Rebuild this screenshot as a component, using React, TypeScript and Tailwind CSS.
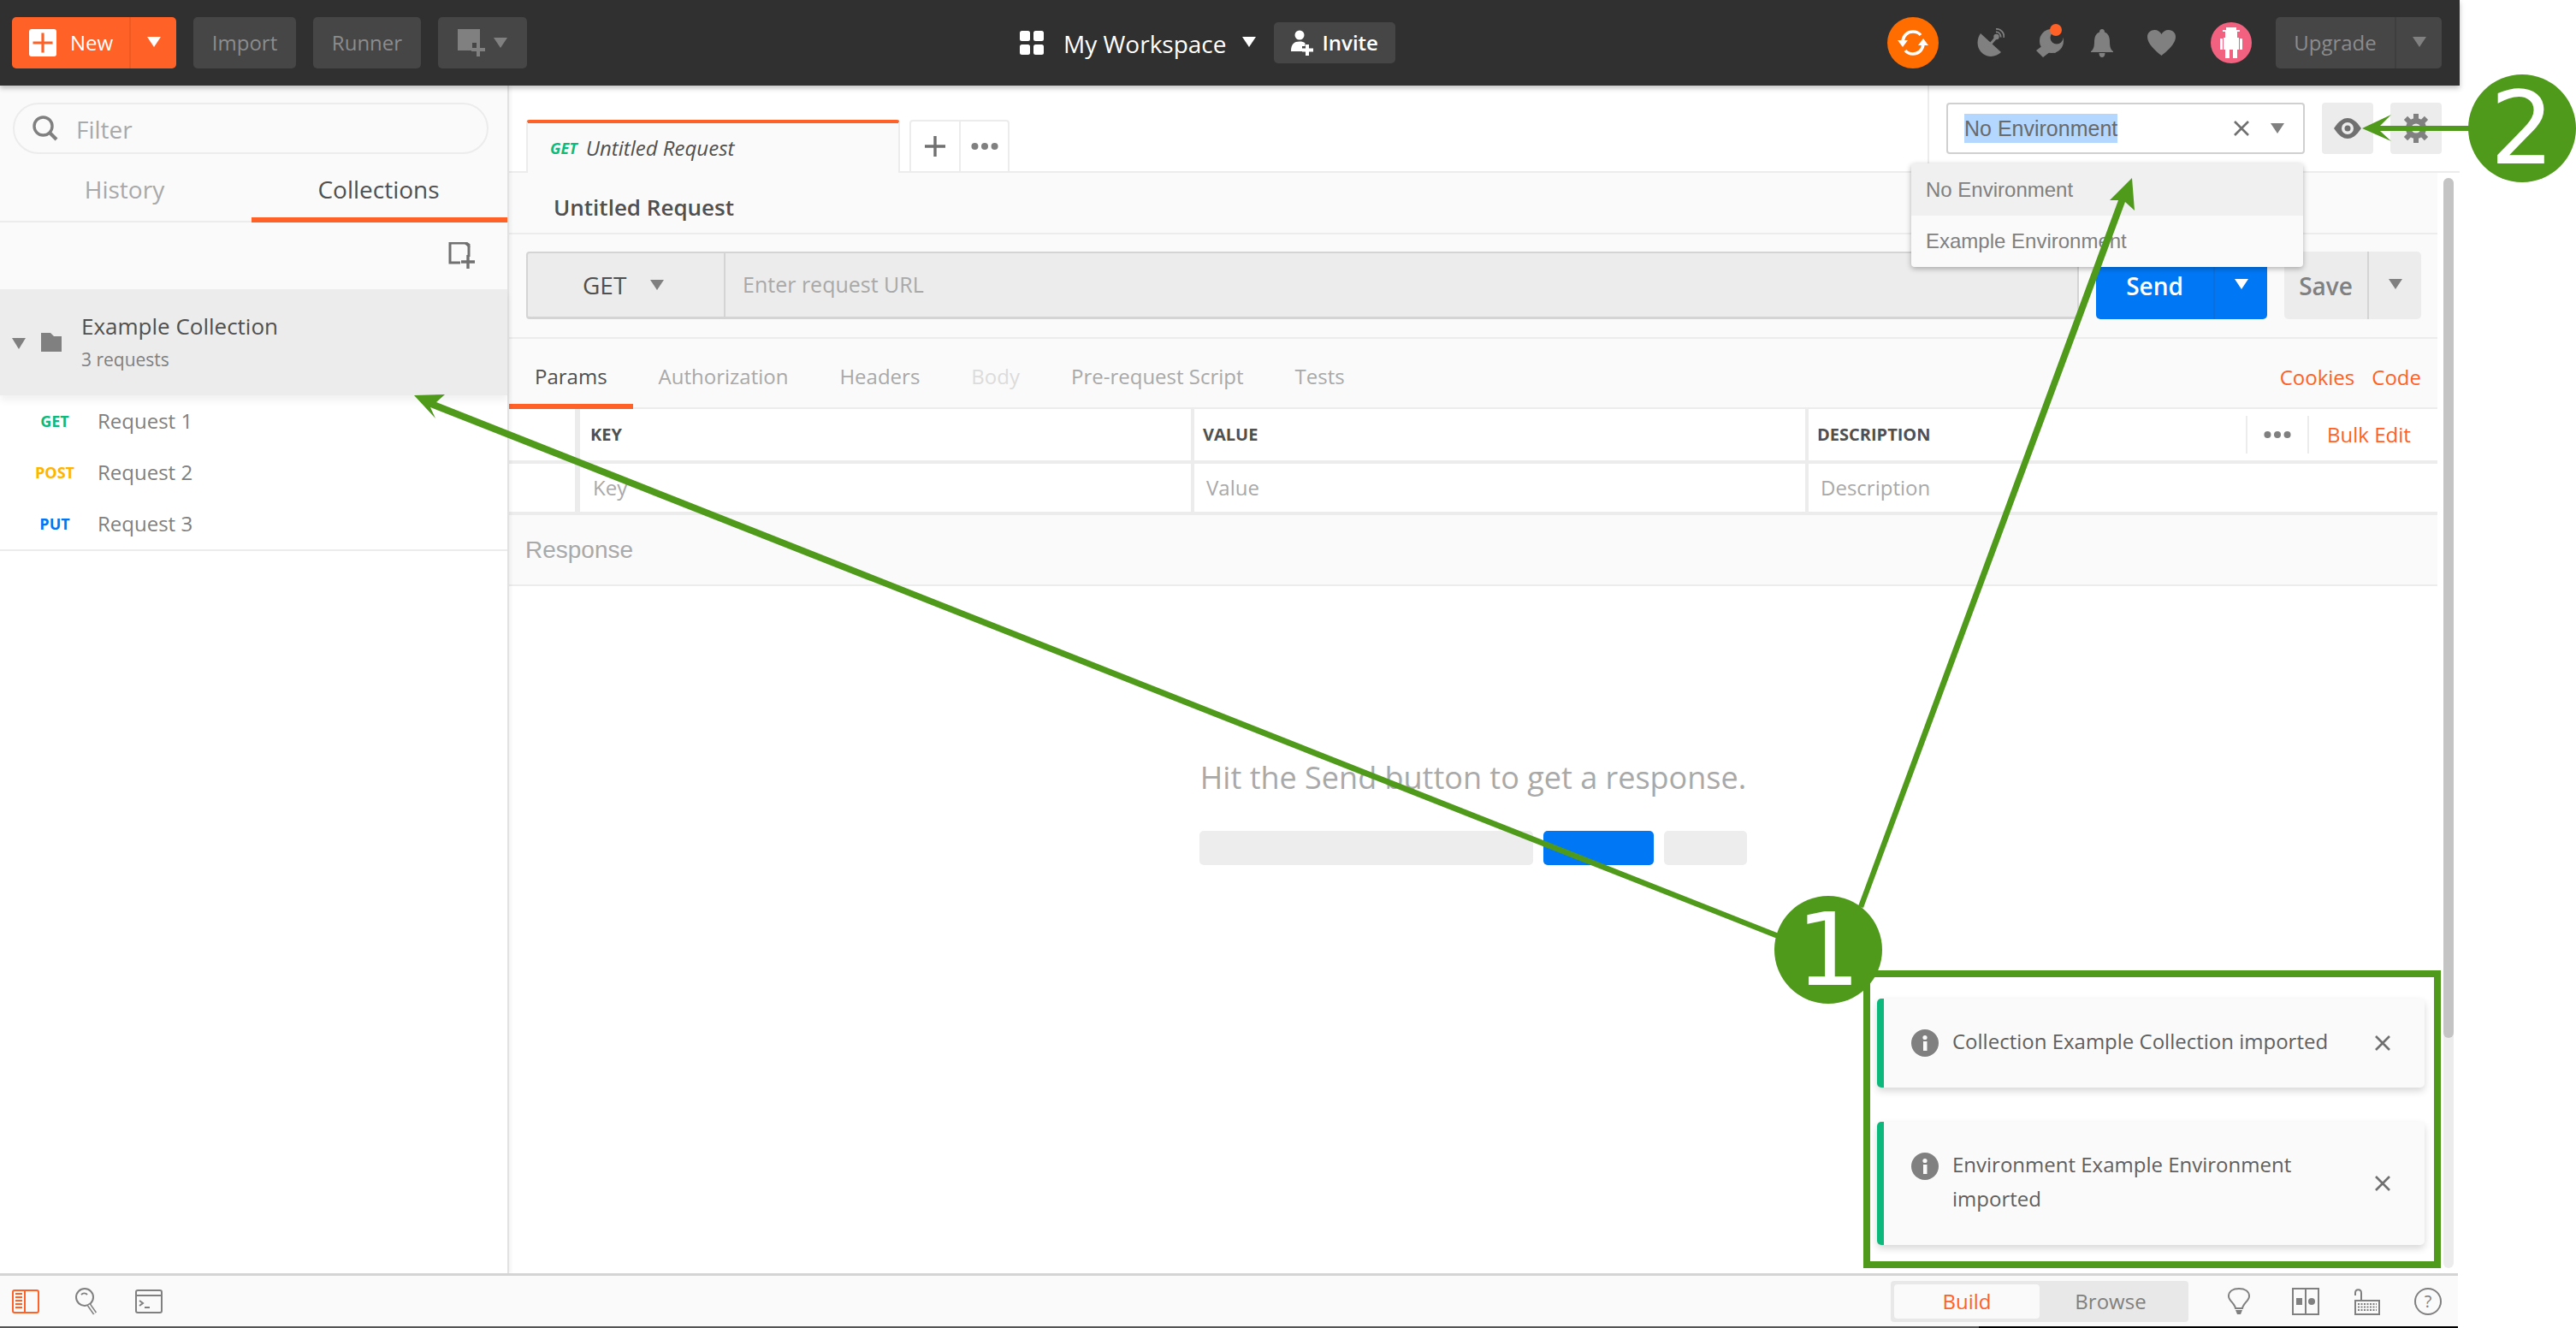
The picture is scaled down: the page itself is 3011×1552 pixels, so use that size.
import type { ReactNode } from "react"

const ORANGE = "#ff6126"

function Tri({ color = "#808080", w = 16, h = 12 }: { color?: string; w?: number; h?: number }) {
    return (
        <svg width={w} height={h} viewBox="0 0 16 12" preserveAspectRatio="none" className="shrink-0">
            <polygon points="0,0 16,0 8,12" fill={color} />
        </svg>
    )
}

function Close({ color = "#707070" }: { color?: string }) {
    return (
        <svg width="20" height="20" viewBox="0 0 20 20" className="shrink-0">
            <path d="M2 2 L18 18 M18 2 L2 18" stroke={color} strokeWidth="2.6" />
        </svg>
    )
}

function Dots({ size = 36 }: { size?: number }) {
    return (
        <svg width={size} height="10" viewBox="0 0 36 10">
            <circle cx="5" cy="5" r="4.5" fill="#808080" />
            <circle cx="18" cy="5" r="4.5" fill="#808080" />
            <circle cx="31" cy="5" r="4.5" fill="#808080" />
        </svg>
    )
}

function DarkButton({ children, className }: { children: ReactNode; className: string }) {
    return (
        <div className={`flex h-[60px] items-center justify-center rounded-[5px] bg-[#464646] text-[24px] text-[#8c8c8c] ${className}`}>
            {children}
        </div>
    )
}

function Header() {
    return (
        <header className="relative z-20 flex h-[100px] shrink-0 items-center bg-[#303030] pl-[14px] pr-[21px] shadow-[0_3px_6px_rgba(0,0,0,0.25)]">
            <div className="flex h-[60px] w-[192px] items-center rounded-[5px] bg-[#ff6126] text-white">
                <div className="flex h-full w-[139px] items-center border-r-2 border-[#ee5a22] pl-[20px]">
                    <svg width="32" height="32" viewBox="0 0 32 32">
                        <rect width="32" height="32" rx="3" fill="#fff" />
                        <path d="M16 4.5 V27.5 M4.5 16 H27.5" stroke="#ff6126" strokeWidth="3.2" />
                    </svg>
                    <span className="ml-[16px] text-[24px]">New</span>
                </div>
                <div className="flex flex-1 items-center justify-center pb-[2px]">
                    <Tri color="#fff" />
                </div>
            </div>
            <DarkButton className="ml-[20px] w-[120px]">Import</DarkButton>
            <DarkButton className="ml-[20px] w-[126px]">Runner</DarkButton>
            <DarkButton className="ml-[20px] w-[104px] gap-[8px]">
                <svg width="34" height="34" viewBox="0 0 34 34">
                    <path d="M0 1 H26 V17 H17 V26 H0 Z" fill="#808080" />
                    <path d="M24 17 V33 M16 25 H32" stroke="#808080" strokeWidth="4" />
                </svg>
                <Tri />
            </DarkButton>

            <div className="ml-[576px] flex items-center">
                <svg width="28" height="28" viewBox="0 0 28 28" fill="#fff">
                    <rect width="12" height="12" rx="2.5" />
                    <rect x="16" width="12" height="12" rx="2.5" />
                    <rect y="16" width="12" height="12" rx="2.5" />
                    <rect x="16" y="16" width="12" height="12" rx="2.5" />
                </svg>
                <span className="ml-[23px] pt-[2px] text-[28px] text-white">My Workspace</span>
                <div className="ml-[18px] mb-[2px]">
                    <Tri color="#fff" />
                </div>
                <div className="ml-[21px] flex h-[48px] w-[142px] items-center rounded-[5px] bg-[#464646] pl-[20px] text-[24px] font-semibold text-white">
                    <svg width="26" height="30" viewBox="0 0 26 30" fill="#fff">
                        <circle cx="10" cy="6" r="5.5" />
                        <path d="M0 25 C0 16 4 13.5 10 13.5 C13 13.5 15 14 16.5 15.5 V19 H13 V25 Z" />
                        <path d="M19 17 V30 M13 23.5 H26" stroke="#fff" strokeWidth="4" />
                    </svg>
                    <span className="ml-[11px]">Invite</span>
                </div>
            </div>

            <div className="ml-auto flex items-center">
                <div className="flex h-[60px] w-[60px] items-center justify-center rounded-full bg-[#ff6c00]">
                    <svg width="36" height="36" viewBox="0 0 36 36" fill="none">
                        <path d="M6 16 C7 9 12 5 18 5 C22 5 25 6.5 27 9" stroke="#fff" strokeWidth="3.6" />
                        <path d="M30 20 C29 27 24 31 18 31 C14 31 11 29.5 9 27" stroke="#fff" strokeWidth="3.6" />
                        <polygon points="0,15 12,15 6,23" fill="#fff" />
                        <polygon points="24,21 36,21 30,13" fill="#fff" />
                    </svg>
                </div>
                {/* satellite dish */}
                <svg className="ml-[44px]" width="33" height="34" viewBox="0 0 33 34" fill="none">
                    <path d="M5 6 L29 28 C24 33 15 35 8 30 C0 24 0 13 5 6 Z" fill="#808080" />
                    <path d="M17 18 L23 11" stroke="#808080" strokeWidth="3" />
                    <circle cx="23.5" cy="10" r="3.2" fill="#808080" />
                    <path d="M23 4.5 C26 4 29 7 28.5 10.5 M23 0.8 C28.5 0.5 33 5 32.3 11" stroke="#808080" strokeWidth="1.8" />
                </svg>
                {/* wrench with notification dot */}
                <svg className="ml-[37px] overflow-visible" width="32" height="34" viewBox="0 0 32 34">
                    <circle cx="18" cy="15" r="14" fill="#808080" />
                    <path d="M8 20 L0 26 L8 34 L17 27 L22 29 L30 22 L32 13 L18 12 Z" fill="#808080" />
                    <circle cx="24" cy="11" r="7.5" fill="#303030" />
                    <rect x="21" y="0" width="12" height="11" fill="#303030" />
                    <circle cx="23" cy="2" r="7" fill="#ff6126" />
                </svg>
                <svg className="ml-[32px]" width="26" height="33" viewBox="0 0 26 33" fill="#808080">
                    <path d="M13 0 C15 0 16 1.5 16 3.5 C20 5 22 9 22 15 C22 20 23 24 26 26 V27 H0 V26 C3 24 4 20 4 15 C4 9 6 5 10 3.5 C10 1.5 11 0 13 0 Z" />
                    <path d="M9.5 28 H16.5 C16.5 31 15 33 13 33 C11 33 9.5 31 9.5 28 Z" />
                </svg>
                <svg className="ml-[40px]" width="33" height="30" viewBox="0 0 33 30" fill="#808080">
                    <path d="M16.5 30 C9 24 0 16 0 8 C0 3 4 0 8.5 0 C12 0 15 2 16.5 5 C18 2 21 0 24.5 0 C29 0 33 3 33 8 C33 16 24 24 16.5 30 Z" />
                </svg>
                <div className="ml-[41px] flex h-[48px] w-[48px] items-center justify-center rounded-full bg-[#f2617f]">
                    <svg width="26" height="36" viewBox="0 0 26 36" fill="#fff">
                        <rect x="7" y="0" width="12" height="3" />
                        <rect x="3" y="3" width="20" height="2" />
                        <rect x="6" y="5" width="14" height="7" />
                        <rect x="4" y="12" width="18" height="14" />
                        <rect x="0" y="13" width="3" height="13" />
                        <rect x="23" y="13" width="3" height="13" />
                        <rect x="6" y="26" width="5" height="10" />
                        <rect x="15" y="26" width="5" height="10" />
                    </svg>
                </div>
                <div className="ml-[28px] flex h-[60px] w-[194px] items-center rounded-[5px] bg-[#464646] text-[24px] text-[#8c8c8c]">
                    <div className="flex h-full w-[141px] items-center justify-center border-r-2 border-[#3e3e3e]">Upgrade</div>
                    <div className="flex flex-1 items-center justify-center pb-[2px]">
                        <Tri />
                    </div>
                </div>
            </div>
        </header>
    )
}

function RequestRow({ method, color, name }: { method: string; color: string; name: string }) {
    return (
        <div className="flex h-[60px] items-center">
            <div className="w-[114px] pl-[14px] text-center text-[18px] font-bold" style={{ color }}>
                {method}
            </div>
            <div className="text-[24px] text-[#808080]">{name}</div>
        </div>
    )
}

function Sidebar() {
    return (
        <aside className="relative z-10 flex w-[595px] shrink-0 flex-col border-r-2 border-[#e2e2e2] bg-white shadow-[2px_0_4px_rgba(0,0,0,0.06)]">
            <div className="bg-[#fafafa]">
                <div className="mx-[15px] mt-[20px] flex h-[60px] w-[556px] items-center rounded-full border-2 border-[#ececec] pl-[21px]">
                    <svg width="30" height="30" viewBox="0 0 30 30" fill="none">
                        <circle cx="12.5" cy="12.5" r="10.5" stroke="#808080" strokeWidth="3.4" />
                        <path d="M20 20 L28 28" stroke="#808080" strokeWidth="4" />
                    </svg>
                    <span className="ml-[21px] pt-[2px] text-[28px] text-[#a9a9a9]">Filter</span>
                </div>
                <div className="flex h-[80px] border-b-2 border-[#ececec] text-[28px]">
                    <div className="flex w-[294px] items-center justify-center pr-[3px] pt-[4px] text-[#a9a9a9]">History</div>
                    <div className="-mb-[2px] flex w-[299px] items-center justify-center border-b-[6px] border-[#ff6126] pr-[2px] pt-[8px] text-[#505050]">Collections</div>
                </div>
                <div className="flex h-[78px] items-center justify-end pr-[37px]">
                    <svg width="32" height="32" viewBox="0 0 32 32" fill="none">
                        <path d="M24 17 V3 L21 1 H2 V24 H14" stroke="#707070" strokeWidth="3" />
                        <path d="M20 1.5 L25 6" stroke="#707070" strokeWidth="2" />
                        <path d="M23 15 V31 M15 23 H31" stroke="#707070" strokeWidth="3.4" />
                    </svg>
                </div>
            </div>
            <div className="relative flex h-[124px] items-center bg-[#ececec] shadow-[0_6px_8px_rgba(0,0,0,0.06)]">
                <div className="ml-[14px] mt-[2px]">
                    <Tri w={16} h={13} />
                </div>
                <svg className="ml-[18px]" width="24" height="22" viewBox="0 0 24 22" fill="#808080">
                    <path d="M0 0 H11 L15 4 H24 V22 H0 Z" />
                </svg>
                <div className="ml-[23px]">
                    <div className="text-[26px] leading-[40px] text-[#505050]">Example Collection</div>
                    <div className="text-[21px] leading-[38px] text-[#808080]">3 requests</div>
                </div>
            </div>
            <div className="border-b-2 border-[#ececec]">
                <RequestRow method="GET" color="#0cbb7b" name="Request 1" />
                <RequestRow method="POST" color="#ffb400" name="Request 2" />
                <RequestRow method="PUT" color="#0076f4" name="Request 3" />
            </div>
        </aside>
    )
}

function Gear() {
    const teeth = [0, 45, 90, 135]
    return (
        <svg width="34" height="34" viewBox="0 0 34 34">
            {teeth.map((deg) => (
                <rect key={deg} x="14" y="0" width="6" height="34" fill="#808080" transform={`rotate(${deg} 17 17)`} />
            ))}
            <circle cx="17" cy="17" r="12" fill="#808080" />
            <circle cx="17" cy="17" r="5.5" fill="#ececec" />
        </svg>
    )
}

function TopStrip() {
    return (
        <div className="flex h-[102px] shrink-0 items-end border-b-2 border-[#ececec] bg-white pl-[20px]">
            <div className="-mb-[2px] flex h-[62px] w-[437px] items-center rounded-t-[4px] border-x-2 border-t-[4px] border-[#ececec] border-t-[#ff6126] bg-[#fafafa] pl-[26px] text-[24px] italic">
                <span className="text-[18px] font-bold text-[#0cbb7b]">GET</span>
                <span className="ml-[10px] text-[#505050]">Untitled Request</span>
            </div>
            <div className="ml-[11px] flex h-[60px] w-[117px] rounded-t-[4px] border-x-2 border-t-2 border-[#ececec]">
                <div className="flex w-[58px] items-center justify-center border-r-2 border-[#ececec]">
                    <svg width="24" height="24" viewBox="0 0 24 24">
                        <path d="M12 0 V24 M0 12 H24" stroke="#707070" strokeWidth="3.4" />
                    </svg>
                </div>
                <div className="flex flex-1 items-center justify-center">
                    <Dots size={32} />
                </div>
            </div>
            <div className="ml-auto flex h-full w-[622px] items-center border-l-2 border-[#ececec] pl-[20px]">
                <div className="flex h-[60px] w-[419px] items-center rounded-[4px] border-2 border-[#d0d0d0] bg-white pl-[19px] font-['Liberation_Sans',sans-serif] text-[25px] text-[#6a6a6a]">
                    <span className="bg-[#b3d7ff] leading-[34px]">No Environment</span>
                    <div className="ml-auto mr-[22px] flex items-center gap-[24px]">
                        <Close />
                        <Tri />
                    </div>
                </div>
                <div className="ml-[20px] flex h-[60px] w-[60px] items-center justify-center rounded-[4px] bg-[#ececec]">
                    <svg width="32" height="24" viewBox="0 0 32 24">
                        <path d="M0 12 C6 3 11 0 16 0 C21 0 26 3 32 12 C26 21 21 24 16 24 C11 24 6 21 0 12 Z" fill="#707070" />
                        <circle cx="16" cy="12" r="7" fill="#ececec" />
                        <circle cx="16" cy="12" r="3.5" fill="#707070" />
                    </svg>
                </div>
                <div className="ml-[20px] flex h-[60px] w-[60px] items-center justify-center rounded-[4px] bg-[#ececec]">
                    <Gear />
                </div>
            </div>
        </div>
    )
}

function UrlBar() {
    return (
        <div className="flex h-[122px] border-b-2 border-[#ececec] pl-[20px] pr-[19px] pt-[20px]">
            <div className="flex h-[79px] flex-1 overflow-hidden rounded-[4px] border-2 border-b-[3px] border-[#d4d4d4] bg-[#ececec]">
                <div className="flex w-[231px] items-center border-r-2 border-[#d4d4d4] pl-[64px] text-[28px] text-[#505050]">
                    <span>GET</span>
                    <div className="ml-[28px]">
                        <Tri />
                    </div>
                </div>
                <div className="flex flex-1 items-center pl-[20px] text-[25px] text-[#a9a9a9]">Enter request URL</div>
            </div>
            <div className="ml-[20px] flex h-[79px] w-[200px] items-center rounded-[5px] bg-[#0078f5] text-[28px] font-semibold text-white">
                <div className="flex h-full w-[139px] items-center justify-center border-r-2 border-[#0a6fdc]">Send</div>
                <div className="flex flex-1 items-center justify-center pb-[4px]">
                    <Tri color="#fff" />
                </div>
            </div>
            <div className="ml-[20px] flex h-[79px] w-[160px] items-center rounded-[5px] bg-[#ececec] text-[28px] font-semibold text-[#808080]">
                <div className="flex h-full w-[99px] items-center justify-center border-r-2 border-[#d4d4d4]">Save</div>
                <div className="flex flex-1 items-center justify-center pb-[4px]">
                    <Tri />
                </div>
            </div>
        </div>
    )
}

function ParamsTable() {
    return (
        <div className="bg-white">
            <div className="flex h-[64px] border-b-[4px] border-[#ececec] text-[20px] font-bold text-[#505050]">
                <div className="w-[83px] border-r-[6px] border-[#ececec]"></div>
                <div className="flex w-[714px] items-center pl-[12px]">KEY</div>
                <div className="flex w-[718px] items-center border-l-[4px] border-[#ececec] pl-[10px]">VALUE</div>
                <div className="flex flex-1 items-center border-l-[4px] border-[#ececec] pl-[10px]">
                    <span>DESCRIPTION</span>
                    <div className="ml-auto flex h-[44px] w-[74px] items-center justify-center border-x-2 border-[#ececec]">
                        <Dots size={32} />
                    </div>
                    <span className="w-[150px] pl-[21px] text-[24px] font-normal text-[#ff6126]">Bulk Edit</span>
                </div>
            </div>
            <div className="flex h-[60px] border-b-[4px] border-[#ececec] text-[24px] text-[#a9a9a9]">
                <div className="w-[83px] border-r-[6px] border-[#ececec]"></div>
                <div className="flex w-[714px] items-center pl-[15px]">Key</div>
                <div className="flex w-[718px] items-center border-l-[4px] border-[#ececec] pl-[14px]">Value</div>
                <div className="flex flex-1 items-center border-l-[4px] border-[#ececec] pl-[14px]">Description</div>
            </div>
        </div>
    )
}

function RequestTabs() {
    const tabs = [
        { label: "Authorization", color: "text-[#a9a9a9]" },
        { label: "Headers", color: "text-[#a9a9a9]" },
        { label: "Body", color: "text-[#dcdcdc]" },
        { label: "Pre-request Script", color: "text-[#a9a9a9]" },
        { label: "Tests", color: "text-[#a9a9a9]" },
    ]
    return (
        <div className="flex h-[82px] border-b-2 border-[#ececec] text-[24px]">
            <div className="-mb-[2px] flex h-[82px] items-center border-b-[6px] border-[#ff6126] px-[30px] pt-[12px] text-[#505050]">Params</div>
            {tabs.map((tab) => (
                <div key={tab.label} className={`flex items-center px-[30px] pt-[8px] ${tab.color}`}>
                    {tab.label}
                </div>
            ))}
            <div className="ml-auto flex items-center gap-[20px] pr-[19px] pt-[10px] text-[24px] text-[#ff6126]">
                <span>Cookies</span>
                <span>Code</span>
            </div>
        </div>
    )
}

function Builder() {
    return (
        <div className="flex min-w-0 flex-1 flex-col">
            <div className="bg-[#fafafa]">
                <div className="flex h-[72px] items-center border-b-2 border-[#ececec] pl-[52px] pt-[10px] text-[26px] font-semibold text-[#505050]">
                    Untitled Request
                </div>
                <UrlBar />
                <RequestTabs />
            </div>
            <ParamsTable />
            <div className="flex h-[83px] items-center border-b-2 border-[#ececec] bg-[#fafafa] pl-[19px] font-['Liberation_Sans',sans-serif] text-[28px] text-[#a9a9a9]">
                Response
            </div>
            <div className="flex flex-1 flex-col items-center pt-[197px]">
                <div className="text-[36px] text-[#a9a9a9]">Hit the Send button to get a response.</div>
                <div className="mt-[35px] flex h-[40px] w-[640px] gap-[12px]">
                    <div className="w-[390px] rounded-[5px] bg-[#ededed]"></div>
                    <div className="w-[129px] rounded-[5px] bg-[#0078f5]"></div>
                    <div className="flex-1 rounded-[5px] bg-[#ededed]"></div>
                </div>
            </div>
        </div>
    )
}

function Main() {
    return (
        <main className="flex min-w-0 flex-1 flex-col bg-white">
            <TopStrip />
            <div className="flex min-h-0 flex-1">
                <Builder />
                <div className="ml-[7px] mr-[7px] mt-[6px] mb-[6px] w-[12px] shrink-0 rounded-full bg-[#ececec]">
                    <div className="h-[1005px] rounded-full bg-[#c4c4c4]"></div>
                </div>
            </div>
        </main>
    )
}

function StatusBar() {
    return (
        <footer className="relative z-10 flex h-[64px] w-[2873px] shrink-0 flex-col border-t-[3px] border-[#d4d4d4] bg-[#fafafa]">
            <div className="flex flex-1 items-center">
                <svg className="ml-[14px]" width="32" height="28" viewBox="0 0 32 28" fill="none">
                    <rect x="1" y="1" width="30" height="26" rx="2" stroke={ORANGE} strokeWidth="2" />
                    <path d="M15 1 V27" stroke={ORANGE} strokeWidth="2" />
                    <path d="M4 5 H12 M4 9 H12 M4 13 H12 M4 17 H12 M4 21 H12" stroke={ORANGE} strokeWidth="2" />
                </svg>
                <svg className="ml-[42px]" width="26" height="32" viewBox="0 0 26 32" fill="none">
                    <circle cx="11" cy="11" r="10" stroke="#808080" strokeWidth="2" />
                    <path d="M7 8 C9 6 12 6 14 8" stroke="#808080" strokeWidth="2" />
                    <path d="M16 20 L23 30" stroke="#808080" strokeWidth="5" />
                    <path d="M16 20 L23 30" stroke="#fafafa" strokeWidth="2" />
                </svg>
                <svg className="ml-[44px]" width="32" height="28" viewBox="0 0 32 28" fill="none">
                    <rect x="1" y="1" width="30" height="26" rx="2" stroke="#808080" strokeWidth="2" />
                    <path d="M1 7 H31" stroke="#808080" strokeWidth="2" />
                    <path d="M5 13 L9 16 L5 19" stroke="#808080" strokeWidth="2" />
                    <path d="M11 21 H17" stroke="#808080" strokeWidth="2" />
                </svg>
                <div className="ml-auto flex h-[48px] w-[348px] items-center rounded-[4px] bg-[#e8e8e8] px-[4px] text-[24px]">
                    <div className="flex h-[40px] w-[170px] items-center justify-center rounded-[4px] bg-[#fafafa] text-[#ff6126]">Build</div>
                    <div className="flex flex-1 items-center justify-center pr-[4px] text-[#808080]">Browse</div>
                </div>
                <svg className="ml-[46px]" width="26" height="32" viewBox="0 0 26 32" fill="none">
                    <path d="M9 24 C8 18 1 15 1 10 C1 4 6 1 13 1 C20 1 25 4 25 10 C25 15 18 18 17 24 Z" stroke="#808080" strokeWidth="2" />
                    <path d="M9 26 H17 L15 31 H11 Z" fill="#808080" />
                </svg>
                <svg className="ml-[49px]" width="32" height="32" viewBox="0 0 32 32" fill="none">
                    <rect x="1" y="1" width="30" height="30" stroke="#808080" strokeWidth="2" />
                    <path d="M16 1 V31" stroke="#808080" strokeWidth="2" />
                    <rect x="5" y="12" width="7" height="8" fill="#808080" />
                    <circle cx="23" cy="16" r="4" fill="#808080" />
                </svg>
                <svg className="ml-[39px]" width="32" height="32" viewBox="0 0 32 32" fill="none">
                    <rect x="3" y="15" width="28" height="16" stroke="#808080" strokeWidth="2" />
                    <path d="M6 19 H28 M6 22.5 H28 M6 26 H28" stroke="#808080" strokeWidth="2" strokeDasharray="2 1.5" />
                    <path d="M10 15 V6 C10 1 3 1 3 6 V9" stroke="#808080" strokeWidth="2" />
                </svg>
                <div className="ml-[40px] mr-[19px] flex h-[32px] w-[32px] items-center justify-center rounded-full border-2 border-[#808080] text-[20px] text-[#808080]">?</div>
            </div>
            <div className="flex h-[2px] shrink-0 bg-black">
                <div className="h-full w-[2313px] bg-[#555555]"></div>
            </div>
        </footer>
    )
}

function Toast({ lines, tall }: { lines: string[]; tall?: boolean }) {
    return (
        <div className={`flex w-[640px] rounded-[5px] border-l-[8px] border-[#0cb87b] bg-[#fafafa] pt-[36px] shadow-[0_4px_8px_rgba(0,0,0,0.16)] ${tall ? "h-[144px]" : "h-[104px]"}`}>
            <svg className="ml-[32px] shrink-0" width="32" height="32" viewBox="0 0 32 32">
                <circle cx="16" cy="16" r="16" fill="#808080" />
                <rect x="14" y="14" width="4.5" height="11" fill="#fafafa" />
                <circle cx="16" cy="9.5" r="2.6" fill="#fafafa" />
            </svg>
            <div className="ml-[16px] -mt-[6px] text-[24px] leading-[40px] text-[#606060]">
                {lines.map((line) => (
                    <div key={line} className="whitespace-nowrap">{line}</div>
                ))}
            </div>
            <div className={`ml-auto mr-[39px] ${tall ? "mt-[26px]" : "mt-[6px]"}`}>
                <Close />
            </div>
        </div>
    )
}

function Annotations() {
    const green = "#4f9a1a"
    return (
        <>
            {/* green box round the toasts */}
            <div className="absolute left-[2178px] top-[1134px] z-30 h-[348px] w-[675px] border-[8px] border-[#4f9a1a]"></div>
            <svg className="pointer-events-none absolute left-0 top-0 z-40" width="3011" height="1552" viewBox="0 0 3011 1552">
                <polygon points="484,462 520,461 510,470 2082,1092 2080,1098 503,476 509,489" fill={green} />
                <polygon points="2492,208 2495,246 2484,236 2178,1061 2172,1059 2476,234 2466,234" fill={green} />
                <polygon points="2761,150 2795,134 2782,147 2890,147 2890,153 2782,153 2795,165" fill={green} />
            </svg>
            <div className="absolute left-[2074px] top-[1047px] z-40 flex h-[126px] w-[126px] items-center justify-center rounded-full bg-[#4f9a1a] font-['DejaVu_Sans',sans-serif] text-[118px] leading-none text-white">1</div>
            <div className="absolute left-[2885px] top-[87px] z-40 flex h-[126px] w-[126px] items-center justify-center rounded-full bg-[#4f9a1a] font-['DejaVu_Sans',sans-serif] text-[118px] leading-none text-white">2</div>
        </>
    )
}

export default function App() {
    return (
        <div className="relative h-[1552px] w-[3011px] overflow-hidden bg-white font-['Open_Sans',sans-serif]">
            <div className="flex h-full w-[2875px] flex-col">
                <Header />
                <div className="flex min-h-0 flex-1">
                    <Sidebar />
                    <Main />
                </div>
                <StatusBar />
            </div>

            {/* environment menu */}
            <div className="absolute left-[2234px] top-[191px] z-20 w-[458px] rounded-[4px] bg-[#fafafa] font-['Liberation_Sans',sans-serif] text-[24px] text-[#808080] shadow-[0_2px_6px_rgba(0,0,0,0.3)]">
                <div className="flex h-[61px] items-center rounded-t-[4px] bg-[#f0f0f0] pl-[17px]">No Environment</div>
                <div className="flex h-[60px] items-center pl-[17px]">Example Environment</div>
            </div>

            {/* toasts */}
            <div className="absolute left-[2194px] top-[1167px] z-20 flex flex-col gap-[40px]">
                <Toast lines={["Collection Example Collection imported"]} />
                <Toast tall lines={["Environment Example Environment", "imported"]} />
            </div>

            <Annotations />
        </div>
    )
}
